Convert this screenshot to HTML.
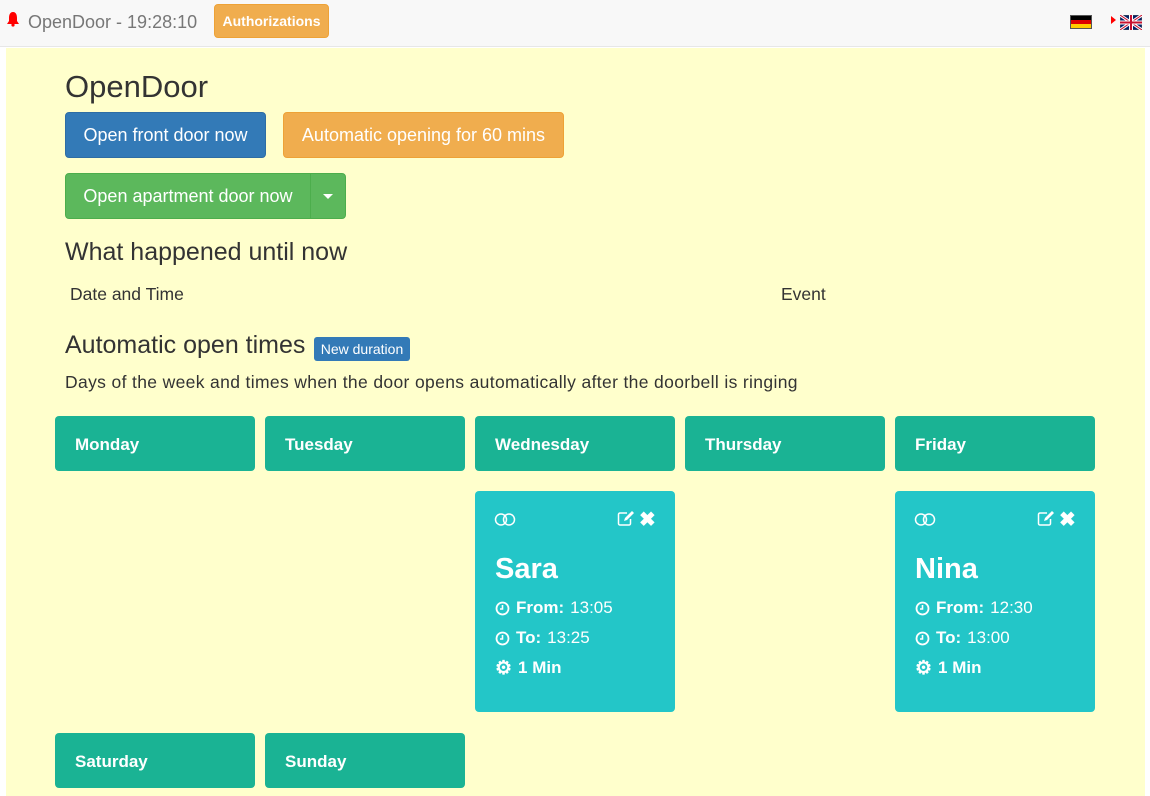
<!DOCTYPE html>
<html><head><meta charset="utf-8"><style>
*{margin:0;padding:0;box-sizing:border-box}
body{width:1150px;height:796px;overflow:hidden;background:#fff;font-family:"Liberation Sans",Helvetica,Arial,sans-serif;color:#333;position:relative}
.abs{position:absolute}
.hdr{left:0;top:0;width:1150px;height:47px;background:#f8f8f8;border-bottom:1px solid #e7e7e7}
.main{left:6px;top:48px;width:1139px;height:748px;background:#ffffcc}
.btn{position:absolute;border-radius:4px;color:#fff;font-size:18px;display:flex;align-items:center;justify-content:center}
.day{position:absolute;width:200px;height:55px;background:#1ab394;border-radius:4px;color:#fff;font-weight:bold;font-size:17px;padding:19px 0 0 20px}
.card{position:absolute;width:200px;height:221px;background:#23c6c8;border-radius:4px;color:#fff}
.card .nm{position:absolute;left:20px;top:62px;font-size:29px;font-weight:bold}
.card .l{position:absolute;left:20px;font-size:17px;font-weight:bold;display:flex;align-items:center;gap:6px}
.card .l span{font-weight:normal}
.h{position:absolute;font-size:25px}
</style></head><body>
<div class="abs hdr"></div>
<svg class="abs" style="left:6px;top:11px" width="14" height="16" viewBox="0 0 14 16"><path d="M7 1C4 1 3 4 3 7v3L1 13h12l-2-3V7c0-3-1-6-4-6z" fill="#f00"/><circle cx="7" cy="14" r="1.6" fill="#f00"/></svg>
<div class="abs" style="left:28px;top:12px;font-size:18px;color:#777">OpenDoor - 19:28:10</div>
<div class="btn" style="left:214px;top:4px;width:115px;height:34px;background:#f0ad4e;border:1px solid #eea236;font-size:14px;font-weight:bold">Authorizations</div>
<div class="abs" style="left:1070px;top:15px;width:22px;height:14px;border:1px solid #555;background:linear-gradient(#000 0 33%,#d00 33% 66%,#fc0 66%)"></div>
<div class="abs" style="left:1111px;top:16px;width:0;height:0;border-left:5px solid #f00;border-top:4px solid transparent;border-bottom:4px solid transparent"></div>
<svg class="abs" style="left:1120px;top:15px" width="22" height="15" viewBox="0 0 22 15"><rect width="22" height="15" fill="#012169" stroke="#555"/><path d="M0 0L22 15M22 0L0 15" stroke="#fff" stroke-width="3"/><path d="M0 0L22 15M22 0L0 15" stroke="#c8102e" stroke-width="1"/><path d="M11 0V15M0 7.5H22" stroke="#fff" stroke-width="4"/><path d="M11 0V15M0 7.5H22" stroke="#c8102e" stroke-width="2"/></svg>
<div class="abs main"></div>
<div class="abs" style="left:65px;top:69px;font-size:31px">OpenDoor</div>
<div class="btn" style="left:65px;top:112px;width:201px;height:46px;background:#337ab7;border:1px solid #2e6da4">Open front door now</div>
<div class="btn" style="left:283px;top:112px;width:281px;height:46px;background:#f0ad4e;border:1px solid #eea236">Automatic opening for 60 mins</div>
<div class="btn" style="left:65px;top:173px;width:246px;height:46px;background:#5cb85c;border:1px solid #4cae4c;border-radius:4px 0 0 4px">Open apartment door now</div>
<div class="btn" style="left:310px;top:173px;width:36px;height:46px;background:#5cb85c;border:1px solid #4cae4c;border-radius:0 4px 4px 0"><div style="border-top:5px solid #fff;border-left:5px solid transparent;border-right:5px solid transparent"></div></div>
<div class="h" style="left:65px;top:238px">What happened until now</div>
<div class="abs" style="left:70px;top:284px;font-size:17.5px">Date and Time</div>
<div class="abs" style="left:781px;top:284px;font-size:17.5px">Event</div>
<div class="h" style="left:65px;top:331px">Automatic open times</div>
<div class="abs" style="left:314px;top:337px;width:96px;height:24px;background:#337ab7;color:#fff;font-size:14px;border-radius:3px;text-align:center;line-height:24px">New duration</div>
<div class="abs" style="left:65px;top:372px;font-size:17.5px;letter-spacing:0.35px;white-space:nowrap">Days of the week and times when the door opens automatically after the doorbell is ringing</div>
<div class="day" style="left:55px;top:416px">Monday</div>
<div class="day" style="left:265px;top:416px">Tuesday</div>
<div class="day" style="left:475px;top:416px">Wednesday</div>
<div class="day" style="left:685px;top:416px">Thursday</div>
<div class="day" style="left:895px;top:416px">Friday</div>
<div class="day" style="left:55px;top:733px">Saturday</div>
<div class="day" style="left:265px;top:733px">Sunday</div>

<div class="card" style="left:475px;top:491px">
<svg class="abs" style="left:19px;top:22px" width="22" height="13" viewBox="0 0 22 13"><circle cx="7" cy="6.5" r="5.5" fill="none" stroke="#fff" stroke-width="1.5"/><circle cx="15" cy="6.5" r="5.5" fill="none" stroke="#fff" stroke-width="1.5"/></svg>
<svg class="abs" style="left:142px;top:19px" width="18" height="17" viewBox="0 0 18 17"><path d="M10 3H3a1.5 1.5 0 0 0-1.5 1.5v9A1.5 1.5 0 0 0 3 15h9a1.5 1.5 0 0 0 1.5-1.5V9" fill="none" stroke="#fff" stroke-width="1.5"/><path d="M7 11l1-3 7-7 2 2-7 7z" fill="#fff"/></svg>
<div class="abs" style="left:164px;top:16px;font-size:20px;font-weight:bold">✖</div>
<div class="nm">Sara</div>
<div class="l" style="top:107px"><svg width="15" height="15" viewBox="0 0 15 15"><circle cx="7.5" cy="7.5" r="6" fill="none" stroke="#fff" stroke-width="1.8"/><path d="M7.5 4v4H5" fill="none" stroke="#fff" stroke-width="1.6"/></svg>From: <span>13:05</span></div>
<div class="l" style="top:137px"><svg width="15" height="15" viewBox="0 0 15 15"><circle cx="7.5" cy="7.5" r="6" fill="none" stroke="#fff" stroke-width="1.8"/><path d="M7.5 4v4H5" fill="none" stroke="#fff" stroke-width="1.6"/></svg>To: <span>13:25</span></div>
<div class="l" style="top:167px"><span style="font-weight:bold;font-size:19px;line-height:19px">⚙</span>1 Min</div>
</div>

<div class="card" style="left:895px;top:491px">
<svg class="abs" style="left:19px;top:22px" width="22" height="13" viewBox="0 0 22 13"><circle cx="7" cy="6.5" r="5.5" fill="none" stroke="#fff" stroke-width="1.5"/><circle cx="15" cy="6.5" r="5.5" fill="none" stroke="#fff" stroke-width="1.5"/></svg>
<svg class="abs" style="left:142px;top:19px" width="18" height="17" viewBox="0 0 18 17"><path d="M10 3H3a1.5 1.5 0 0 0-1.5 1.5v9A1.5 1.5 0 0 0 3 15h9a1.5 1.5 0 0 0 1.5-1.5V9" fill="none" stroke="#fff" stroke-width="1.5"/><path d="M7 11l1-3 7-7 2 2-7 7z" fill="#fff"/></svg>
<div class="abs" style="left:164px;top:16px;font-size:20px;font-weight:bold">✖</div>
<div class="nm">Nina</div>
<div class="l" style="top:107px"><svg width="15" height="15" viewBox="0 0 15 15"><circle cx="7.5" cy="7.5" r="6" fill="none" stroke="#fff" stroke-width="1.8"/><path d="M7.5 4v4H5" fill="none" stroke="#fff" stroke-width="1.6"/></svg>From: <span>12:30</span></div>
<div class="l" style="top:137px"><svg width="15" height="15" viewBox="0 0 15 15"><circle cx="7.5" cy="7.5" r="6" fill="none" stroke="#fff" stroke-width="1.8"/><path d="M7.5 4v4H5" fill="none" stroke="#fff" stroke-width="1.6"/></svg>To: <span>13:00</span></div>
<div class="l" style="top:167px"><span style="font-weight:bold;font-size:19px;line-height:19px">⚙</span>1 Min</div>
</div>
</body></html>
